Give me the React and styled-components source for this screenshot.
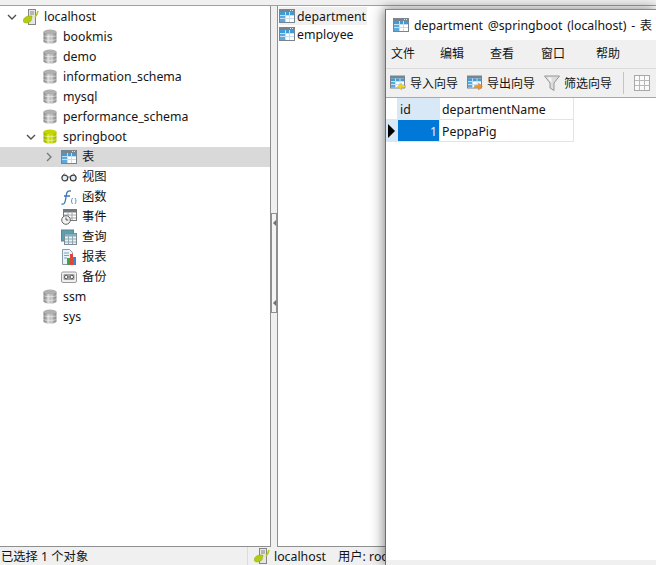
import styled, { createGlobalStyle } from "styled-components";

const GlobalStyle = createGlobalStyle`
  html, body {
    margin: 0;
    padding: 0;
    overflow: hidden;
  }
  body {
    font-family: "Noto Sans", "Noto Sans CJK SC", sans-serif;
    font-size: 12.3px;
    color: #141414;
  }
`;

const Page = styled.div`
  position: relative;
  width: 656px;
  height: 565px;
  display: flex;
  flex-direction: column;
  background: #f0f0f0;
  overflow: hidden;
`;
const TopStrip = styled.div`
  height: 5px;
  border-bottom: 1px solid #a0a0a0;
`;
const Main = styled.div`
  flex: 1;
  display: flex;
  min-height: 0;
`;
const TreePanel = styled.div`
  width: 270px;
  padding-top: 1px;
  background: #fff;
  border-right: 1px solid #8f8f8f;
  border-bottom: 1px solid #8f8f8f;
`;
const Splitter = styled.div`
  width: 6px;
  padding-top: 207px;
  box-sizing: border-box;
`;
const SplitHandle = styled.div`
  height: 100px;
  box-sizing: border-box;
  border: 1px solid #8f8f8f;
  background: #f4f4f4;
  display: flex;
  flex-direction: column;
  justify-content: space-between;
  padding: 6px 0 6px 1px;
`;
const SplitArrow = styled.div`
  width: 0;
  height: 0;
  border-style: solid;
  border-width: 3px 3px 3px 0;
  border-color: transparent #6f6f6f transparent transparent;
`;
const ListPanel = styled.div`
  flex: 1;
  background: #fff;
  border-left: 1px solid #8f8f8f;
  border-bottom: 1px solid #8f8f8f;
  padding: 0 0 0 1px;
`;
const TreeRow = styled.div`
  height: 20px;
  display: flex;
  align-items: center;
  padding-left: ${(p) => p.$indent}px;
  background: ${(p) => (p.$selected ? "#d9d9d9" : "transparent")};
  white-space: nowrap;
`;
const Chevron = styled.svg`
  width: 10px;
  height: 10px;
  flex: none;
  margin-right: ${(p) => p.$gap}px;
`;
const Icon = styled.svg`
  display: block;
  flex: none;
  width: ${(p) => p.$w || 16}px;
  height: ${(p) => p.$h || 16}px;
  margin-top: ${(p) => p.$lift || 0}px;
`;
const RowLabel = styled.span`
  margin-left: ${(p) => p.$gap}px;
  line-height: 20px;
`;
const ListRow = styled.div`
  width: 88px;
  height: 18px;
  display: flex;
  align-items: center;
  gap: 2px;
  background: ${(p) => (p.$selected ? "#f0f0f0" : "transparent")};
  margin-top: ${(p) => (p.$selected ? "1px" : "0")};
  white-space: nowrap;
`;
const StatusBar = styled.div`
  height: 18px;
  display: flex;
  align-items: center;
`;
const StatusLeft = styled.div`
  width: 247px;
  padding-left: 1px;
  box-sizing: border-box;
`;
const StatusRight = styled.div`
  height: 100%;
  display: flex;
  align-items: center;
  border-left: 1px solid #dcdcdc;
  padding-left: 6px;
  gap: 4px;
  white-space: nowrap;
`;
const StatusUser = styled.span`
  margin-left: 8px;
`;

const Window = styled.div`
  position: absolute;
  left: 385px;
  top: 9px;
  width: 271px;
  height: 556px;
  display: flex;
  flex-direction: column;
  background: #fff;
  border-left: 1px solid #6e6e6e;
  border-top: 1px solid #8a8a8a;
  box-shadow: -3px 0 12px rgba(0, 0, 0, 0.32), 0 -2px 8px rgba(0, 0, 0, 0.18);
  box-sizing: border-box;
`;
const TitleBar = styled.div`
  height: 30px;
  flex: none;
  display: flex;
  align-items: center;
  gap: 5px;
  padding-left: 7px;
  white-space: nowrap;
  word-spacing: 1.5px;
`;
const MenuBar = styled.div`
  height: 26px;
  flex: none;
  display: flex;
  align-items: center;
  gap: 25px;
  padding: 0 0 2px 5px;
  background: #f0f0f0;
  border-bottom: 1px solid #dadada;
  font-size: 12px;
`;
const MenuItem = styled.span`
  margin-left: ${(p) => p.$shift || 0}px;
`;
const ToolBar = styled.div`
  height: 28px;
  flex: none;
  display: flex;
  align-items: center;
  padding-left: 4px;
  background: #f0f0f0;
  border-bottom: 1px solid #a8a8a8;
  font-size: 12px;
  white-space: nowrap;
`;
const ToolButton = styled.div`
  display: flex;
  align-items: center;
  gap: 4px;
  margin-right: 9px;
`;
const ToolSeparator = styled.div`
  width: 1px;
  height: 22px;
  background: #c4c4c4;
  margin: 0 10px 0 2px;
`;
const Grid = styled.div`
  flex: 1;
  display: grid;
  grid-template-columns: 12px 42px 134px;
  grid-auto-rows: 22px;
  align-content: start;
`;
const Cell = styled.div`
  display: flex;
  align-items: center;
  box-sizing: border-box;
  padding: 1px 2px 0;
  border-right: 1px solid #e4e4e4;
  border-bottom: 1px solid #e4e4e4;
  justify-content: ${(p) => (p.$right ? "flex-end" : "flex-start")};
  background: ${(p) => p.$bg || "#fff"};
  color: ${(p) => p.$fg || "inherit"};
`;
const RowMark = styled.div`
  width: 0;
  height: 0;
  border-style: solid;
  border-width: 7px 0 7px 7px;
  border-color: transparent transparent transparent #000;
`;
const WindowFoot = styled.div`
  height: 5px;
  flex: none;
  background: #f0f0f0;
`;

const DbIcon = ({ lit }) => {
  const id = lit ? "dbLit" : "dbGrey";
  const stops = lit
    ? ["#8fa800", "#d7e800", "#a3bb00"]
    : ["#7f7f7f", "#d2d2d2", "#8c8c8c"];
  return (
    <Icon $w={14} $h={15} $lift={-2} viewBox="0 0 14 16" preserveAspectRatio="none">
      <defs>
        <linearGradient id={id} x1="0" x2="1" y1="0" y2="0">
          <stop offset="0" stopColor={stops[0]} />
          <stop offset="0.4" stopColor={stops[1]} />
          <stop offset="1" stopColor={stops[2]} />
        </linearGradient>
      </defs>
      <path d="M0.500 3v10c0 1.500 3 2.500 6.500 2.500s6.500-1 6.500-2.500V3z" fill={`url(#${id})`} />
      <ellipse cx="7" cy="3" rx="6.500" ry="2.500" fill={lit ? "#c3d600" : "#b0b0b0"} />
      <path d="M0.500 7c1.500 1.500 11.500 1.500 13 0M0.500 11c1.500 1.500 11.500 1.500 13 0M5 6v9M9 6v9" stroke="#fff" strokeOpacity="0.5" fill="none" />
    </Icon>
  );
};

const TableIcon = () => (
  <Icon $h={14} viewBox="0 0 16 14">
    <rect x="0" y="0" width="16" height="14" fill="#78858f" />
    <rect x="1" y="3" width="14" height="10" fill="#fff" />
    <rect x="1" y="3" width="5" height="10" fill="#5fa9da" />
    <rect x="1" y="3" width="14" height="3" fill="#3f9ad6" />
    <path d="M1 6.500h14M1 9.500h14M6.500 3v10M10.500 3v10" stroke="#c6deee" strokeWidth="1" />
    <rect x="11" y="1" width="1" height="1" fill="#dfe6ea" />
    <rect x="13" y="1" width="1" height="1" fill="#dfe6ea" />
  </Icon>
);

const HostIcon = () => (
  <Icon viewBox="0 0 16 16">
    <rect x="5.500" y="0.500" width="7" height="15" fill="#e6e6e6" stroke="#858585" />
    <path d="M7 3h4M7 5h4" stroke="#858585" />
    <path d="M0.300 12c0-3.500 3.500-5.500 8.700-5l-.8 4.500c-1.500 3-7.900 3.500-7.900.5z" fill="#b2cb14" stroke="#8ea400" strokeWidth="0.500" />
    <path d="M12 8c1.500-1.500 2.500-3.500 3-6" stroke="#b2cb14" strokeWidth="1.500" fill="none" />
  </Icon>
);

const GlassesIcon = () => (
  <Icon viewBox="0 0 16 16">
    <circle cx="3.800" cy="9" r="2.900" fill="#e6eef5" stroke="#3c3c3c" strokeWidth="1.200" />
    <circle cx="12.200" cy="9" r="2.900" fill="#e6eef5" stroke="#3c3c3c" strokeWidth="1.200" />
    <path d="M6.500 8h3M1.500 7l2-2.500M14.500 7l-2-2.500" stroke="#6a6a6a" fill="none" />
  </Icon>
);

const FuncIcon = () => (
  <Icon viewBox="0 0 16 16">
    <path d="M0.500 15c2.500 .6 3.500-1 4-4l1-6c.5-2.500 2-3.500 4.500-3M3 7h6" stroke="#3a78b8" strokeWidth="1.300" fill="none" />
    <path d="M11.500 9c-1.300 2-1.300 4 0 6M14 9c1.300 2 1.300 4 0 6" stroke="#5a92c8" strokeWidth="1" fill="none" />
  </Icon>
);

const EventIcon = () => (
  <Icon viewBox="0 0 16 16">
    <rect x="2.500" y="0.500" width="13" height="11" fill="#fff" stroke="#777" />
    <rect x="3" y="1" width="12" height="2.500" fill="#707a82" />
    <path d="M3 6h12M3 9h12M7 4v7M11 4v7" stroke="#a6a6a6" />
    <circle cx="5" cy="11" r="4.300" fill="#f2f2f2" stroke="#666" />
    <path d="M5 8.500V11h2.300" stroke="#555" fill="none" />
  </Icon>
);

const QueryIcon = () => (
  <Icon viewBox="0 0 16 16">
    <rect x="0.500" y="1" width="12" height="11" fill="#5aa0b4" stroke="#6c7c84" />
    <rect x="3.500" y="4.500" width="12" height="11" fill="#e9f1f3" stroke="#7d8b92" />
    <rect x="4" y="5" width="11" height="2.500" fill="#7cb4c4" />
    <path d="M4 10h11M4 13h11M7.500 5v10M11.500 5v10" stroke="#8fa8b2" />
  </Icon>
);

const ReportIcon = () => (
  <Icon viewBox="0 0 16 16">
    <path d="M1.500 0.500h7l3 3v12h-10z" fill="#eef2f6" stroke="#8d9aa6" />
    <path d="M3 4h5M3 6.500h5M3 9h3" stroke="#6da7d6" />
    <rect x="6" y="9" width="3" height="7" fill="#3aa64a" />
    <rect x="9" y="5" width="3" height="11" fill="#e0453a" />
    <rect x="12" y="8" width="3" height="8" fill="#3f86c9" />
  </Icon>
);

const BackupIcon = () => (
  <Icon viewBox="0 0 16 16">
    <rect x="0.500" y="3" width="15" height="10.500" rx="1.500" fill="#f0f0f0" stroke="#999" />
    <rect x="2.500" y="5" width="11" height="6" rx="1" fill="#a4a4a4" />
    <circle cx="5.200" cy="8" r="1.700" fill="#fff" stroke="#555" />
    <circle cx="10.800" cy="8" r="1.700" fill="#fff" stroke="#555" />
  </Icon>
);

const WizardIcon = ({ out }) => (
  <Icon viewBox="0 0 16 16">
    <rect x="0" y="0.500" width="15" height="13" fill="#78858f" />
    <rect x="1" y="3.500" width="13" height="9" fill="#fff" />
    <rect x="1" y="3.500" width="4.500" height="9" fill="#5fa9da" />
    <rect x="1" y="3.500" width="13" height="2.500" fill="#3f9ad6" />
    <path d="M1 6.500h13M1 9.500h13M5.500 3.500v9M10 3.500v9" stroke="#c6deee" />
    {out ? (
      <path d="M7.500 10.500h4V8l4 3.500-4 3.500v-2.500h-4z" fill="#f0952a" stroke="#c8701a" strokeWidth="0.400" />
    ) : (
      <path d="M15.500 10.500h-4V8l-4 3.500 4 3.500v-2.500h4z" fill="#f2d52a" stroke="#c4a510" strokeWidth="0.400" />
    )}
  </Icon>
);

const FunnelIcon = () => (
  <Icon viewBox="0 0 16 16">
    <path d="M0.500 1h15L10 8v7.500L6 13V8z" fill="#dcdcdc" stroke="#969696" />
    <path d="M3.500 2.500h4L7.500 8z" fill="#f6f6f6" />
  </Icon>
);

const GridIcon = () => (
  <Icon viewBox="0 0 16 16">
    <rect x="0.500" y="0.500" width="15" height="15" fill="#fafafa" stroke="#a8a8a8" />
    <path d="M5.500 1v14M10.500 1v14M1 5.500h14M1 10.500h14" stroke="#b8b8b8" />
  </Icon>
);

const Down = ({ gap }) => (
  <Chevron $gap={gap} viewBox="0 0 10 10">
    <path d="M1 3l4 4 4-4" stroke="#505050" strokeWidth="1.400" fill="none" />
  </Chevron>
);

const Right = ({ gap }) => (
  <Chevron $gap={gap} viewBox="0 0 10 10">
    <path d="M3 1l4 4-4 4" stroke="#7a7a7a" strokeWidth="1.400" fill="none" />
  </Chevron>
);

const closedDbs = ["bookmis", "demo", "information_schema", "mysql", "performance_schema"];
const objects = [
  ["视图", GlassesIcon],
  ["函数", FuncIcon],
  ["事件", EventIcon],
  ["查询", QueryIcon],
  ["报表", ReportIcon],
  ["备份", BackupIcon],
];

const App = () => {
  return (
    <Page>
      <GlobalStyle />
      <TopStrip />
      <Main>
        <TreePanel>
          <TreeRow $indent={7}>
            <Down gap={6} />
            <HostIcon />
            <RowLabel $gap={5}>localhost</RowLabel>
          </TreeRow>
          {closedDbs.map((name) => (
            <TreeRow key={name} $indent={43}>
              <DbIcon />
              <RowLabel $gap={6}>{name}</RowLabel>
            </TreeRow>
          ))}
          <TreeRow $indent={26}>
            <Down gap={7} />
            <DbIcon lit />
            <RowLabel $gap={6}>springboot</RowLabel>
          </TreeRow>
          <TreeRow $indent={44} $selected>
            <Right gap={7} />
            <TableIcon />
            <RowLabel $gap={5}>表</RowLabel>
          </TreeRow>
          {objects.map(([name, Glyph]) => (
            <TreeRow key={name} $indent={61}>
              <Glyph />
              <RowLabel $gap={5}>{name}</RowLabel>
            </TreeRow>
          ))}
          {["ssm", "sys"].map((name) => (
            <TreeRow key={name} $indent={43}>
              <DbIcon />
              <RowLabel $gap={6}>{name}</RowLabel>
            </TreeRow>
          ))}
        </TreePanel>
        <Splitter>
          <SplitHandle>
            <SplitArrow />
            <SplitArrow />
          </SplitHandle>
        </Splitter>
        <ListPanel>
          <ListRow $selected>
            <TableIcon />
            department
          </ListRow>
          <ListRow>
            <TableIcon />
            employee
          </ListRow>
        </ListPanel>
      </Main>
      <StatusBar>
        <StatusLeft>已选择 1 个对象</StatusLeft>
        <StatusRight>
          <HostIcon />
          localhost
          <StatusUser>用户: root</StatusUser>
        </StatusRight>
      </StatusBar>

      <Window>
        <TitleBar>
          <TableIcon />
          department @springboot (localhost) - 表
        </TitleBar>
        <MenuBar>
          <MenuItem>文件</MenuItem>
          <MenuItem>编辑</MenuItem>
          <MenuItem $shift={1}>查看</MenuItem>
          <MenuItem $shift={2}>窗口</MenuItem>
          <MenuItem $shift={6}>帮助</MenuItem>
        </MenuBar>
        <ToolBar>
          <ToolButton>
            <WizardIcon />
            导入向导
          </ToolButton>
          <ToolButton>
            <WizardIcon out />
            导出向导
          </ToolButton>
          <ToolButton>
            <FunnelIcon />
            筛选向导
          </ToolButton>
          <ToolSeparator />
          <GridIcon />
        </ToolBar>
        <Grid>
          <Cell />
          <Cell $bg="#d9e8f7">id</Cell>
          <Cell>departmentName</Cell>
          <Cell $bg="#d9e8f7">
            <RowMark />
          </Cell>
          <Cell $bg="#0078d7" $fg="#e8f2fb" $right>
            1
          </Cell>
          <Cell>PeppaPig</Cell>
        </Grid>
        <WindowFoot />
      </Window>
    </Page>
  );
};

export default App;
